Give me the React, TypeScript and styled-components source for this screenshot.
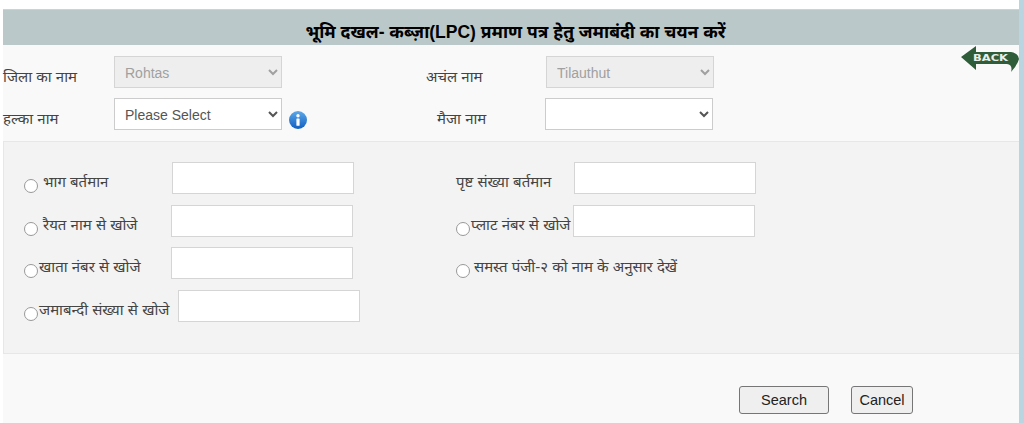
import styled, { createGlobalStyle } from "styled-components";

const GlobalStyle = createGlobalStyle`
  html, body {
    margin: 0;
    padding: 0;
    background: #fff;
  }
  body {
    font-family: "Liberation Sans", "Noto Sans", "Noto Sans Devanagari", "Lohit Devanagari", sans-serif;
  }
`;

const Page = styled.div`
  position: relative;
  box-sizing: border-box;
  width: 1024px;
  height: 423px;
  overflow: hidden;
  padding: 9px 0 0 3px;
  border-right: 5px solid #b9d5e2;
`;

const Banner = styled.h1`
  box-sizing: border-box;
  height: 36px;
  margin: 0;
  padding: 10px 0 0 9px;
  background: #bbc8c9;
  border-top: 1px solid #c9d4d5;
  color: #000;
  font-size: 17.5px;
  font-weight: bold;
  line-height: 24px;
  text-align: center;
`;

const Body = styled.div`
  position: relative;
  height: 378px;
  background: #f9f9f9;
`;

const Filters = styled.div`
  display: grid;
  grid-template-rows: 32px 32px;
  row-gap: 10px;
  height: 96px;
  padding-top: 11px;
  box-sizing: border-box;
`;

const FilterRow = styled.div`
  display: flex;
  align-items: center;
`;

const FilterLabel = styled.label<{ $width: number; $indent?: number }>`
  box-sizing: border-box;
  width: ${({ $width }) => $width}px;
  padding: 8px 0 0 ${({ $indent }) => $indent ?? 0}px;
  color: #444;
  font-size: 15px;
  white-space: nowrap;
`;

const Select = styled.select`
  box-sizing: border-box;
  width: 168px;
  height: 32px;
  padding: 1px 6px 0;
  background-color: #fff;
  border: 1px solid #ccc;
  color: #555;
  font-family: "Liberation Sans", sans-serif;
  font-size: 14px;

  &:disabled {
    background-color: #eee;
    border-color: #d5d5d5;
    color: #a0a0a0;
    opacity: 1;
  }
`;

const InfoIcon = styled.svg`
  width: 18px;
  height: 18px;
  margin: 11px 0 0 7px;
  flex: none;
`;

const Spacer = styled.div<{ $width: number }>`
  width: ${({ $width }) => $width}px;
  flex: none;
`;

const BackLink = styled.svg`
  position: absolute;
  top: 1px;
  right: 0;
  width: 58px;
  height: 27px;
`;

const SearchPanel = styled.div`
  box-sizing: border-box;
  display: grid;
  grid-template-columns: 432px 1fr;
  grid-auto-rows: 42.67px;
  align-content: start;
  height: 213px;
  padding: 20px 0 0 20px;
  background: #f3f3f3;
  border: 1px solid #e7e7e7;
  border-right: 0;
`;

const Field = styled.div`
  display: flex;
  align-items: flex-start;
`;

const Radio = styled.input.attrs({ type: "radio" })`
  appearance: none;
  box-sizing: border-box;
  width: 14px;
  height: 14px;
  margin: 17px 0 0 0;
  flex: none;
  background: #fff;
  border: 1px solid #999;
  border-radius: 50%;
`;

const FieldLabel = styled.label<{ $width: number; $indent?: number }>`
  box-sizing: border-box;
  flex: none;
  width: ${({ $width }) => $width}px;
  padding: 9px 0 0 ${({ $indent }) => $indent ?? 0}px;
  color: #444;
  font-size: 15px;
  line-height: 22px;
  white-space: nowrap;
`;

const TextInput = styled.input.attrs({ type: "text" })`
  box-sizing: border-box;
  width: 182px;
  height: 32px;
  background: #fff;
  border: 1px solid #d5d5d5;
`;

const Actions = styled.div`
  display: flex;
  justify-content: flex-end;
  gap: 22px;
  padding: 32px 106px 0 0;
`;

const Button = styled.button<{ $width: number }>`
  box-sizing: border-box;
  width: ${({ $width }) => $width}px;
  height: 28px;
  padding: 0;
  background: #efefef;
  border: 1px solid #767676;
  border-radius: 3px;
  color: #222;
  font-family: "Liberation Sans", sans-serif;
  font-size: 14.5px;
`;

const App = () => (
  <>
    <GlobalStyle />
    <Page>
      <Banner>भूमि दखल- कब्ज़ा(LPC) प्रमाण पत्र हेतु जमाबंदी का चयन करें</Banner>
      <Body>
        <Filters>
          <FilterRow>
            <FilterLabel $width={111}>जिला का नाम</FilterLabel>
            <Select disabled defaultValue="Rohtas">
              <option>Rohtas</option>
            </Select>
            <Spacer $width={25} />
            <FilterLabel $width={239} $indent={119}>अचंल नाम</FilterLabel>
            <Select disabled defaultValue="Tilauthut">
              <option>Tilauthut</option>
            </Select>
          </FilterRow>
          <FilterRow>
            <FilterLabel $width={111}>हल्का नाम</FilterLabel>
            <Select defaultValue="Please Select">
              <option>Please Select</option>
            </Select>
            <InfoIcon viewBox="0 0 18 18">
              <defs>
                <linearGradient id="infoFill" x1="0" y1="0" x2="0" y2="1">
                  <stop offset="0" stopColor="#5fa8ea" />
                  <stop offset="1" stopColor="#0f5fc0" />
                </linearGradient>
              </defs>
              <circle cx="9" cy="9" r="9" fill="url(#infoFill)" />
              <circle cx="9" cy="4.8" r="1.7" fill="#fff" />
              <rect x="7.4" y="7.4" width="3.2" height="7.4" rx="0.6" fill="#fff" />
            </InfoIcon>
            <FilterLabel $width={238} $indent={130}>मैजा नाम</FilterLabel>
            <Select />
          </FilterRow>
        </Filters>
        <BackLink viewBox="0 0 58 27">
          <path
            d="M0 11 L15 0 L15 6 L50 6 Q57 7 58 13 Q56 20 50 26 Q52 19 46 18 L15 18 L15 24 Z"
            fill="#2f5d3a"
          />
          <text
            x="12"
            y="15"
            fill="#e8efe8"
            fontFamily="'DejaVu Sans', sans-serif"
            fontSize="8"
            fontWeight="bold"
            textLength="35"
            lengthAdjust="spacingAndGlyphs"
          >
            BACK
          </text>
        </BackLink>
        <SearchPanel>
          <Field>
            <Radio name="mode" />
            <FieldLabel $width={134} $indent={5}>भाग बर्तमान</FieldLabel>
            <TextInput />
          </Field>
          <Field>
            <FieldLabel $width={118}>पृष्ट संख्या बर्तमान</FieldLabel>
            <TextInput />
          </Field>
          <Field>
            <Radio name="mode" />
            <FieldLabel $width={133} $indent={5}>रैयत नाम से खोजे</FieldLabel>
            <TextInput />
          </Field>
          <Field>
            <Radio name="mode" />
            <FieldLabel $width={103} $indent={1}>प्लाट नंबर से खोजे</FieldLabel>
            <TextInput />
          </Field>
          <Field>
            <Radio name="mode" />
            <FieldLabel $width={133} $indent={1}>खाता नंबर से खोजे</FieldLabel>
            <TextInput />
          </Field>
          <Field>
            <Radio name="mode" />
            <FieldLabel $width={300} $indent={4}>समस्त पंजी-२ को नाम के अनुसार देखें</FieldLabel>
          </Field>
          <Field>
            <Radio name="mode" />
            <FieldLabel $width={140} $indent={1}>जमाबन्दी संख्या से खोजे</FieldLabel>
            <TextInput />
          </Field>
        </SearchPanel>
        <Actions>
          <Button $width={90}>Search</Button>
          <Button $width={62}>Cancel</Button>
        </Actions>
      </Body>
    </Page>
  </>
);

export default App;
